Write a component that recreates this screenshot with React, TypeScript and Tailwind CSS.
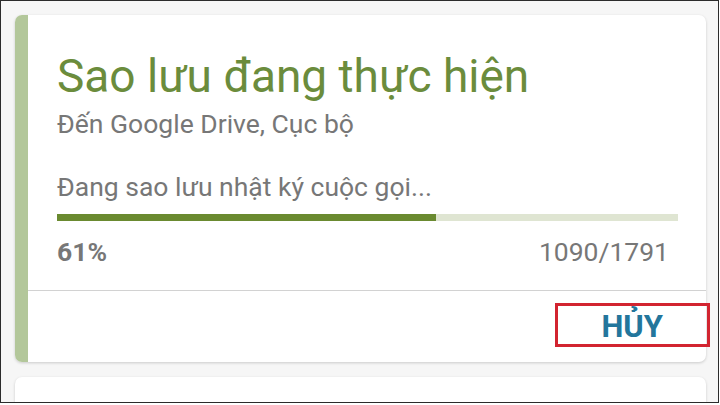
import React from "react";

export default function App() {
  const font = { fontFamily: "Roboto, 'Noto Sans', sans-serif" };
  return (
    <div className="w-[720px] h-[405px] bg-white" style={font}>
      <div className="w-[719px] h-[403px] overflow-hidden border border-[#2b2b2b] bg-[#f6f6f6] flex flex-col pl-[14px] pr-[12px] pt-[14px] gap-[15px]">
        <div className="relative h-[347px] shrink-0 flex rounded-[7px] bg-white shadow-[0_1px_3px_rgba(0,0,0,0.18)]">
          <div className="w-[13px] shrink-0 rounded-l-[7px] bg-[#b3c79a]" />
          <div className="flex-1 flex flex-col">
            <div className="flex flex-col pl-[29px] pr-[28px] pt-[34px] h-[275px]">
              <div className="text-[46px] leading-[54px] text-[#6b8c3c] whitespace-nowrap">Sao lưu đang thực hiện</div>
              <div className="text-[26.5px] leading-[32px] text-[#777777] mt-[5px]">Đến Google Drive, Cục bộ</div>
              <div className="text-[26.5px] leading-[32px] text-[#777777] mt-[31px]">Đang sao lưu nhật ký cuộc gọi...</div>
              <div className="h-[7px] mt-[11px] bg-[#dfe5d2] flex">
                <div className="h-full bg-[#6a8a30]" style={{ width: "61%" }} />
              </div>
              <div className="flex justify-between items-center mt-[15px] pr-[9px]">
                <span className="text-[26.5px] leading-[32px] font-bold text-[#777777]">61%</span>
                <span className="text-[26.5px] leading-[32px] text-[#777777]">1090/1791</span>
              </div>
            </div>
            <div className="h-px bg-[#d2d2d2]" />
            <div className="flex-1 flex justify-end items-center pr-[43px]">
              <span className="text-[31px] leading-[36px] font-bold text-[#23769c]">HỦY</span>
            </div>
          </div>
          <div className="absolute left-[540px] top-[288px] w-[155px] h-[44px] border-[3px] border-[#d22430]" />
        </div>
        <div className="flex-1 rounded-t-[7px] bg-white shadow-[0_1px_3px_rgba(0,0,0,0.18)]" />
      </div>
    </div>
  );
}
